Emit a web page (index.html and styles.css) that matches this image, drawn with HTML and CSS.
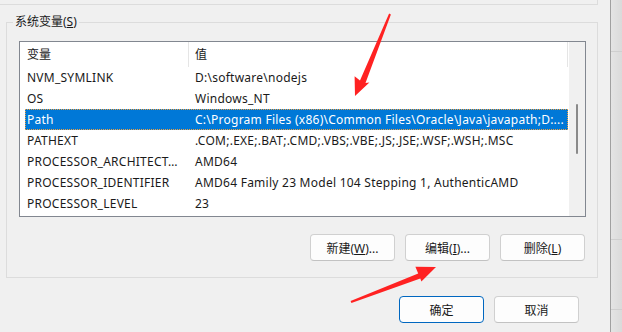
FILE: index.html
```html
<!DOCTYPE html>
<html lang="zh-CN">
<head>
  <meta charset="UTF-8" />
  <meta name="viewport" content="width=device-width, initial-scale=1.0"/>
  <title>环境变量</title>
  <link rel="stylesheet" href="styles.css">
</head>
<body>

<div class="dialog">
  <div class="prev-group"></div>

  <fieldset class="group">
    <legend>系统变量(<u>S</u>)</legend>

    <div class="list">
      <div class="list-main">
        <div class="list-head">
          <div class="name">变量</div>
          <div class="value">值</div>
        </div>
        <div class="row"><div class="name">NVM_SYMLINK</div><div class="value">D:\software\nodejs</div></div>
        <div class="row"><div class="name">OS</div><div class="value">Windows_NT</div></div>
        <div class="row selected"><div class="name">Path</div><div class="value">C:\Program Files (x86)\Common Files\Oracle\Java\javapath;D:...</div></div>
        <div class="row"><div class="name">PATHEXT</div><div class="value">.COM;.EXE;.BAT;.CMD;.VBS;.VBE;.JS;.JSE;.WSF;.WSH;.MSC</div></div>
        <div class="row"><div class="name">PROCESSOR_ARCHITECT…</div><div class="value">AMD64</div></div>
        <div class="row"><div class="name">PROCESSOR_IDENTIFIER</div><div class="value">AMD64 Family 23 Model 104 Stepping 1, AuthenticAMD</div></div>
        <div class="row"><div class="name">PROCESSOR_LEVEL</div><div class="value">23</div></div>
      </div>
      <div class="scrollbar"><div class="thumb"></div></div>
    </div>

    <div class="actions">
      <button class="btn">新建(<u>W</u>)...</button>
      <button class="btn">编辑(<u>I</u>)...</button>
      <button class="btn">删除(<u>L</u>)</button>
    </div>
  </fieldset>

  <div class="footer">
    <button class="btn primary">确定</button>
    <button class="btn">取消</button>
  </div>
</div>

<div class="edge"></div>

<!-- annotation arrows drawn over the dialog -->
<svg class="marks" width="622" height="332" viewBox="0 0 622 332">
  <polygon points="389.1,13.6 390.9,14.4 365.5,82.9 369.4,82.5 355,96 354.6,76.3 360,80.5"/>
  <polygon points="350.6,301.1 351.4,302.9 420.3,278.5 421.4,281.6 436,267 415.4,266.8 418.2,273.6"/>
</svg>

</body>
</html>
```

FILE: styles.css
```css
body {
  margin: 0;
  width: 622px;
  height: 332px;
  overflow: hidden;
  position: relative;
  display: flex;
  background-color: #f0f0f0;
  font-family: 'Noto Sans', 'Noto Sans CJK SC', sans-serif;
  font-size: 12px;
  color: #1a1a1a;
}

.dialog {
  width: 610px;
  border-right: 1px solid #a0a0a0;
}

.edge {
  flex: 1;
  background:
    linear-gradient(#cfcfcf, #cfcfcf) 0 51px / 100% 1px no-repeat,
    linear-gradient(#cfcfcf, #cfcfcf) 0 239px / 100% 1px no-repeat,
    linear-gradient(#cfcfcf, #cfcfcf) 0 309px / 100% 1px no-repeat,
    linear-gradient(to right, #e4e4e4, #dadada);
}

.prev-group {
  width: 597px;
  height: 4px;
  border-right: 1px solid #dcdcdc;
  border-bottom: 1px solid #dcdcdc;
}

.group {
  margin: 9px 12px 0 6px;
  padding: 0 11px 16px 12px;
  border: 1px solid #dcdcdc;
}

.group legend {
  margin-left: -6px;
  padding: 0 2px;
  line-height: 16px;
}

.list {
  display: flex;
  height: 174px;
  margin-top: 11px;
  background-color: #ffffff;
  border: 1px solid #828790;
}

.list-main {
  flex: 1;
  min-width: 0;
  padding-left: 5px;
}

.list-head {
  display: flex;
  height: 25px;
  line-height: 25px;
  margin-right: 1px;
  border-right: 1px solid #e5e5e5;
}

.list-head .name {
  width: 161px;
  padding-left: 2px;
  border-right: 1px solid #e5e5e5;
}

.list-head .value {
  padding-left: 6px;
}

.row {
  display: flex;
  height: 21px;
  line-height: 21px;
  margin-right: 1px;
  white-space: nowrap;
  letter-spacing: 0.25px;
}

.row .name {
  width: 162px;
  padding-left: 2px;
}

.row .value {
  flex: 1;
  min-width: 0;
  padding-left: 6px;
}

.row.selected {
  background-color: #0078d7;
  color: #ffffff;
  outline: 1px dotted #f0a040;
  outline-offset: -1px;
}

.scrollbar {
  width: 16px;
  padding-top: 62px;
  background-color: #f0f0f0;
}

.thumb {
  width: 2px;
  height: 50px;
  margin: 0 auto;
  border-radius: 1px;
  background-color: #8a8a8a;
}

.actions {
  display: flex;
  justify-content: flex-end;
  gap: 10px;
  margin-top: 17px;
  margin-right: 1px;
}

.footer {
  display: flex;
  justify-content: flex-end;
  gap: 10px;
  margin: 18px 31px 0 0;
}

.btn {
  width: 85px;
  height: 27px;
  padding: 0;
  font-family: inherit;
  font-size: 12px;
  color: #1a1a1a;
  background-color: #fdfdfd;
  border: 1px solid #d0d0d0;
  border-bottom-color: #c2c2c2;
  border-radius: 4px;
}

.btn.primary {
  border-color: #0067c0;
}

.marks {
  position: absolute;
  top: 0;
  left: 0;
  pointer-events: none;
}

.marks polygon {
  fill: #ff2222;
}
```
